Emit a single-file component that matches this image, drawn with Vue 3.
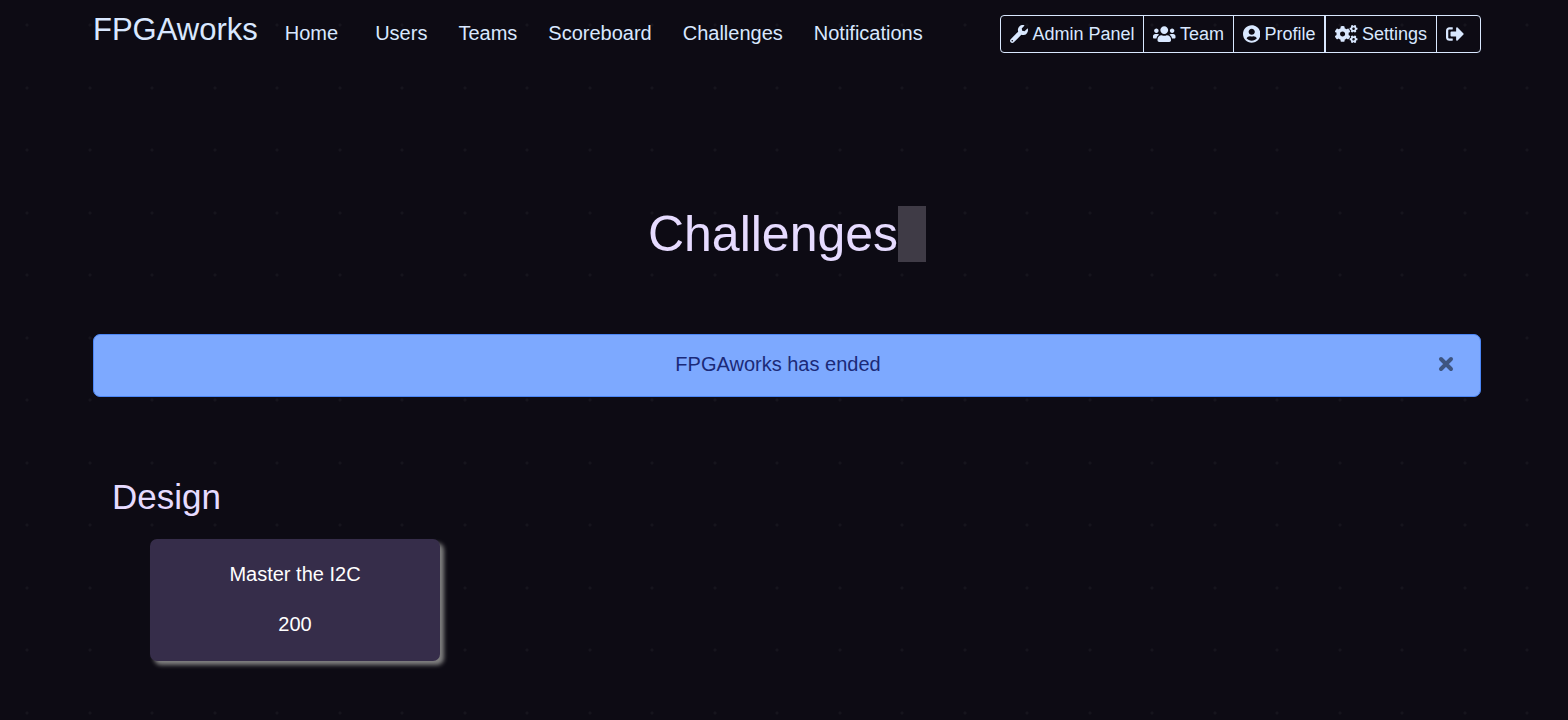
<script setup>
import { ref } from 'vue'

const links = ['Home', 'Users', 'Teams', 'Scoreboard', 'Challenges', 'Notifications']

const smallCog =
  'M512.1 191l-8.2 14.3c-3 5.3-9.4 7.5-15.1 5.4-11.8-4.4-22.6-10.7-32.1-18.6-4.6-3.8-5.8-10.5-2.8-15.7l8.2-14.3c-6.9-8-12.3-17.3-15.9-27.4h-16.5c-6 0-11.2-4.3-12.2-10.3-2-12-2.1-24.6 0-37.1 1-6 6.2-10.4 12.2-10.4h16.5c3.6-10.1 9-19.4 15.9-27.4l-8.2-14.3c-3-5.2-1.9-11.9 2.8-15.7 9.5-7.9 20.4-14.2 32.1-18.6 5.7-2.1 12.1.1 15.1 5.4l8.2 14.3c10.5-1.9 21.2-1.9 31.7 0L552 6.3c3-5.3 9.4-7.5 15.1-5.4 11.8 4.4 22.6 10.7 32.1 18.6 4.6 3.8 5.8 10.5 2.8 15.7l-8.2 14.3c6.9 8 12.3 17.3 15.9 27.4h16.5c6 0 11.2 4.3 12.2 10.3 2 12 2.1 24.6 0 37.1-1 6-6.2 10.4-12.2 10.4h-16.5c-3.6 10.1-9 19.4-15.9 27.4l8.2 14.3c3 5.2 1.9 11.9-2.8 15.7-9.5 7.9-20.4 14.2-32.1 18.6-5.7 2.1-12.1-.1-15.1-5.4l-8.2-14.3c-10.4 1.9-21.2 1.9-31.7 0zm-10.5-58.8c38.5 29.6 82.4-14.3 52.8-52.8-38.5-29.7-82.4 14.3-52.8 52.8z'

const tools = [
  {
    label: 'Admin Panel',
    width: 512,
    path: 'M507.73 109.1c-2.24-9.03-13.54-12.09-20.12-5.51l-74.36 74.36-67.88-11.31-11.31-67.88 74.36-74.36c6.62-6.62 3.43-17.9-5.66-20.16-47.38-11.74-99.55.91-136.58 37.93-39.64 39.64-50.55 97.1-34.05 147.2L18.74 402.76c-24.99 24.99-24.99 65.51 0 90.5 24.99 24.99 65.51 24.99 90.5 0l213.21-213.21c50.12 16.71 107.47 5.68 147.37-34.22 37.07-37.07 49.7-89.32 37.91-136.73zM64 472c-13.25 0-24-10.75-24-24 0-13.26 10.75-24 24-24s24 10.74 24 24c0 13.25-10.75 24-24 24z',
  },
  {
    label: 'Team',
    width: 640,
    path: 'M96 224c35.3 0 64-28.7 64-64s-28.7-64-64-64-64 28.7-64 64 28.7 64 64 64zm448 0c35.3 0 64-28.7 64-64s-28.7-64-64-64-64 28.7-64 64 28.7 64 64 64zm32 32h-64c-17.6 0-33.5 7.1-45.1 18.6 40.3 22.1 68.9 62 75.1 109.4h66c17.7 0 32-14.3 32-32v-32c0-35.3-28.7-64-64-64zm-256 0c61.9 0 112-50.1 112-112S381.9 32 320 32 208 82.1 208 144s50.1 112 112 112zm76.8 32h-8.3c-20.8 10-43.9 16-68.5 16s-47.6-6-68.5-16h-8.3C179.6 288 128 339.6 128 403.2V432c0 26.5 21.5 48 48 48h288c26.5 0 48-21.5 48-48v-28.8c0-63.6-51.6-115.2-115.2-115.2zm-223.7-13.4C161.5 263.1 145.6 256 128 256H64c-35.3 0-64 28.7-64 64v32c0 17.7 14.3 32 32 32h65.9c6.3-47.4 34.9-87.3 75.2-109.4z',
  },
  {
    label: 'Profile',
    width: 496,
    path: 'M248 8C111 8 0 119 0 256s111 248 248 248 248-111 248-248S385 8 248 8zm0 96c48.6 0 88 39.4 88 88s-39.4 88-88 88-88-39.4-88-88 39.4-88 88-88zm0 344c-58.7 0-111.3-26.6-146.5-68.2 18.8-35.4 55.6-59.8 98.5-59.8 2.4 0 4.8.4 7.1 1.1 13 4.2 26.6 6.9 40.9 6.9 14.3 0 28-2.7 40.9-6.9 2.3-.7 4.7-1.1 7.1-1.1 42.9 0 79.7 24.4 98.5 59.8C359.3 421.4 306.7 448 248 448z',
  },
  {
    label: 'Settings',
    width: 640,
    split: true,
    cogs: true,
    path: 'M386.3 286.1l33.7 16.8c10.1 5.8 14.5 18.1 10.5 29.1-8.9 24.2-26.4 46.4-42.6 65.8-7.4 8.9-20.2 11.1-30.3 5.3l-29.1-16.8c-16 13.7-34.6 24.6-54.9 31.7v33.6c0 11.6-8.3 21.6-19.7 23.6-24.6 4.2-50.4 4.4-75.9 0-11.5-2-20-11.9-20-23.6V418c-20.3-7.2-38.9-18-54.9-31.7L74 403c-10 5.8-22.9 3.6-30.3-5.3-16.2-19.4-33.3-41.6-42.2-65.7-4-10.9.4-23.2 10.5-29.1l33.3-16.8c-3.9-20.9-3.9-42.4 0-63.4L12 205.8c-10.1-5.8-14.6-18.1-10.5-29 8.9-24.2 26-46.4 42.2-65.8 7.4-8.9 20.2-11.1 30.3-5.3l29.1 16.8c16-13.7 34.6-24.6 54.9-31.7V57.1c0-11.5 8.2-21.5 19.6-23.5 24.6-4.2 50.5-4.4 76-.1 11.5 2 20 11.9 20 23.6v33.6c20.3 7.2 38.9 18 54.9 31.7l29.1-16.8c10-5.8 22.9-3.6 30.3 5.3 16.2 19.4 33.2 41.6 42.1 65.8 4 10.9.1 23.2-10 29.1l-33.7 16.8c3.9 21 3.9 42.5 0 63.5zm-117.6 21.1c59.2-77-28.7-164.9-105.7-105.7-59.2 77 28.7 164.9 105.7 105.7z',
  },
  {
    label: '',
    title: 'Logout',
    width: 512,
    path: 'M497 273L329 441c-15 15-41 4.5-41-17v-96H152c-13.3 0-24-10.7-24-24v-96c0-13.3 10.7-24 24-24h136V88c0-21.4 25.9-32 41-17l168 168c9.3 9.4 9.3 24.6 0 34zM192 436v-40c0-6.6-5.4-12-12-12H96c-17.7 0-32-14.3-32-32V160c0-17.7 14.3-32 32-32h84c6.6 0 12-5.4 12-12V76c0-6.6-5.4-12-12-12H96c-53 0-96 43-96 96v192c0 53 43 96 96 96h84c6.6 0 12-5.4 12-12z',
  },
]

const categories = [{ name: 'Design', challenges: [{ name: 'Master the I2C', points: 200 }] }]
const showAlert = ref(true)
</script>

<template>
  <div class="page">
    <header class="navbar">
      <a class="brand" href="#">FPGAworks</a>
      <nav class="links" aria-label="Main">
        <a v-for="link in links" :key="link" class="link" href="#">{{ link }}</a>
      </nav>
      <nav class="tools" aria-label="Account">
        <a
          v-for="tool in tools"
          :key="tool.label"
          class="tool"
          :class="{ split: tool.split }"
          href="#"
          :aria-label="tool.title"
        >
          <svg class="icon" :viewBox="`0 0 ${tool.width} 512`" aria-hidden="true">
            <path :d="tool.path" />
            <template v-if="tool.cogs">
              <path :d="smallCog" />
              <path :d="smallCog" transform="translate(0 299)" />
            </template>
          </svg>
          <span>{{ tool.label }}</span>
        </a>
      </nav>
    </header>

    <main>
      <h1 class="title">Challenges<span class="cursor"></span></h1>

      <div v-if="showAlert" class="alert" role="alert">
        <span class="message">FPGAworks has ended</span>
        <button class="close" type="button" aria-label="Close" @click="showAlert = false">
          <svg class="cross" viewBox="0 0 18 18" aria-hidden="true">
            <path d="M4 4L14 14M14 4L4 14" />
          </svg>
        </button>
      </div>

      <section v-for="category in categories" :key="category.name" class="category">
        <h2 class="heading">{{ category.name }}</h2>
        <div class="grid">
          <button v-for="item in category.challenges" :key="item.name" class="card" type="button">
            <span>{{ item.name }}</span>
            <span>{{ item.points }}</span>
          </button>
        </div>
      </section>
    </main>
  </div>
</template>

<style>
body {
  background-color: #0d0b14;
  background-image:
    radial-gradient(circle at 27px 25px, #16151d 1px, transparent 2px),
    radial-gradient(circle at 90px 25px, #16151d 1px, transparent 2px),
    radial-gradient(circle at 27px 88px, #16151d 1px, transparent 2px),
    radial-gradient(circle at 90px 88px, #16151d 1px, transparent 2px);
  background-size: 125px 125px;
}
</style>

<style scoped>
.page {
  padding: 10px 87px 58px 93px;
  font-family: "Liberation Sans", Arial, sans-serif;
  font-size: 20px;
  line-height: 30px;
  color: #d9e8ff;
}

.navbar {
  display: flex;
  align-items: center;
  min-height: 47px;
}

.brand {
  align-self: flex-start;
  margin-right: 17px;
  font-size: 31px;
  line-height: 39px;
}

.brand,
.link,
.tool {
  color: inherit;
  text-decoration: none;
  white-space: nowrap;
}

.links {
  display: flex;
  gap: 11px;
  padding-bottom: 2px;
}

.link {
  padding: 0 10px;
}

.link:first-child {
  margin-right: 6px;
}

.tools {
  display: flex;
  margin-left: auto;
  border: 1px solid #d9e8ff;
  border-radius: 4px;
}

.tool {
  display: flex;
  align-items: center;
  gap: 4px;
  padding: 0 9px;
  border-left: 1px solid #d9e8ff;
  font-size: 18px;
  line-height: 36px;
}

.tool:first-child {
  border-left: 0;
}

.tool:last-child {
  padding-right: 12px;
}

.tool.split {
  border-left-width: 2px;
}

.icon {
  flex: none;
  height: 18px;
  fill: currentColor;
}

.title {
  display: flex;
  justify-content: center;
  margin: 147px 0 0;
  font-size: 50px;
  font-weight: 400;
  line-height: 60px;
  color: #e6dbff;
}

.cursor {
  align-self: center;
  width: 28px;
  height: 56px;
  background: #3f3b46;
}

.alert {
  display: flex;
  align-items: center;
  margin-top: 70px;
  padding: 14px 25px 17px;
  border: 1px solid #4b86f5;
  border-radius: 7px;
  background: #7da9ff;
  color: #1b2a78;
}

.message {
  flex: 1;
  text-align: center;
}

.close {
  display: flex;
  padding: 0;
  border: 0;
  background: none;
  color: #3e5580;
  cursor: pointer;
}

.cross {
  width: 18px;
  height: 18px;
  fill: none;
  stroke: currentColor;
  stroke-width: 4;
  stroke-linecap: round;
}

.category {
  margin-top: 79px;
  padding: 0 19px;
}

.heading {
  margin: 0;
  font-size: 35px;
  font-weight: 400;
  line-height: 42px;
  color: #e6dbff;
}

.grid {
  display: grid;
  grid-template-columns: repeat(auto-fill, 290px);
  gap: 20px;
  margin-top: 21px;
  padding: 0 38px;
}

.card {
  display: flex;
  flex-direction: column;
  align-items: center;
  gap: 20px;
  padding: 20px 10px 22px;
  border: 0;
  border-radius: 7px;
  background: #362d4a;
  box-shadow: 4px 4px 4px gray;
  font: inherit;
  color: #fff;
  cursor: pointer;
}
</style>
